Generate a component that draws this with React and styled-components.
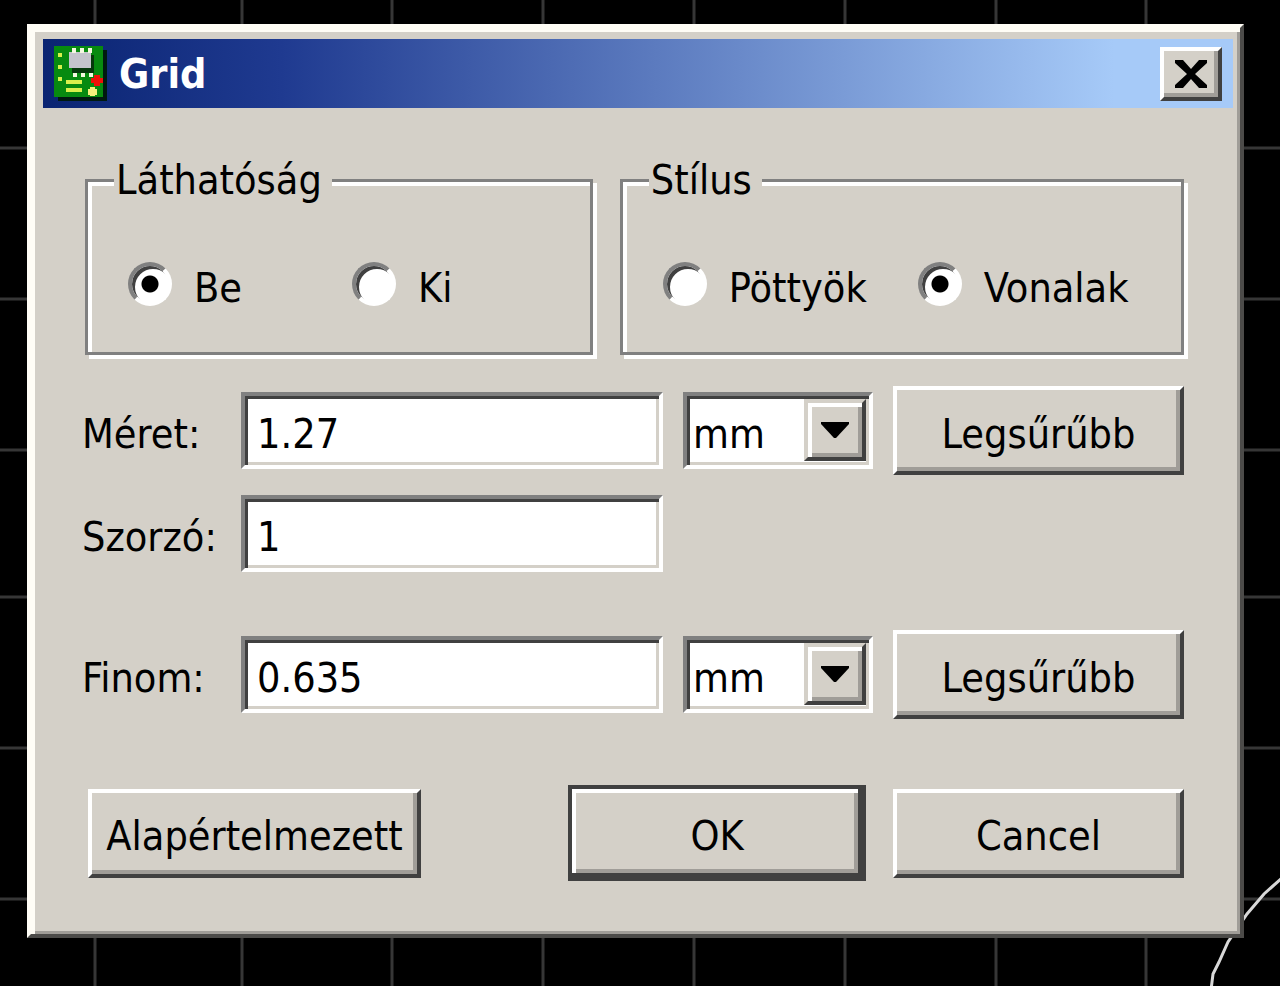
import React, { useState } from "react";
import styled, { createGlobalStyle } from "styled-components";

const GlobalStyle = createGlobalStyle`
  * {
    box-sizing: border-box;
  }
  body {
    margin: 0;
    background-color: #000000;
    overflow: hidden;
  }
  body, input, select, button {
    font-family: "DejaVu Sans Condensed", "DejaVu Sans", sans-serif;
    font-size: 41px;
    line-height: 48px;
    color: #000000;
  }
`;
const Desktop = styled.div`
  min-height: 100vh;
  padding: 24px 36px 48px 27px;
`;
const Board = styled.svg`
  position: absolute;
  top: 0;
  left: 0;
  z-index: -1;
`;
const Dialog = styled.form`
  border: 4px solid;
  border-color: #fffdf6 #4c4b49 #4c4b49 #fffdf6;
  background-color: #d4d0c8;
  box-shadow: inset 4px 4px 0 #fffdf6, inset -3px -3px 0 #a09d98;
`;
const TitleBar = styled.header`
  display: flex;
  align-items: center;
  gap: 12px;
  height: 69px;
  margin: 11px 7px 0 12px;
  padding: 0 11px;
  background: linear-gradient(to right, #0a2472, #1f3a90 20%, #a6caf8 90%);
`;
const Title = styled.h1`
  flex: 1;
  margin: 0;
  font-size: 41px;
  font-weight: bold;
  color: #ffffff;
`;
const CloseButton = styled.button`
  display: flex;
  align-items: center;
  justify-content: center;
  width: 62px;
  height: 54px;
  padding: 0;
  background-color: #d4d0c8;
  border: 4px solid;
  border-color: #ffffff #404040 #404040 #ffffff;
  box-shadow: inset -4px -4px 0 #a09d98;
`;
const Body = styled.div`
  padding: 48px 56px 53px 54px;
`;
const Groups = styled.div`
  display: grid;
  grid-template-columns: 9fr 10fr;
  gap: 27px;
  margin-bottom: 31px;
`;
const Group = styled.fieldset`
  min-width: 0;
  margin: 0;
  padding: 60px 0 40px 40px;
  border: 3px solid #808080;
  box-shadow: inset 4px 4px 0 #ffffff, 4px 4px 0 #ffffff;
`;
const Legend = styled.legend`
  margin-left: -14px;
  padding: 0 10px 0 2px;
  background-color: #d4d0c8;
`;
const Options = styled.div`
  display: grid;
  grid-template-columns: ${(props) => props.$first}px 1fr;
`;
const Option = styled.label`
  display: flex;
  align-items: center;
  gap: 22px;
  height: 48px;
  white-space: nowrap;
`;
const Radio = styled.input`
  appearance: none;
  flex: none;
  width: 44px;
  height: 44px;
  margin: 0 0 8px;
  border: 4px solid;
  border-color: #808080 #ffffff #ffffff #808080;
  border-radius: 50%;
  background-color: #ffffff;
  box-shadow: inset 3px 3px 0 #404040;

  &:checked {
    background-image: radial-gradient(circle, #000000 8px, transparent 9px);
  }
`;
const Row = styled.div`
  display: grid;
  grid-template-columns: 136px 1fr 190px 291px;
  column-gap: 20px;
  align-items: center;
  margin-bottom: ${(props) => props.$space}px;
`;
const Name = styled.label`
  margin-left: -3px;
  padding-top: 6px;
`;
const Field = styled.input`
  width: 100%;
  height: 77px;
  padding: 6px 12px 0;
  border: 4px solid;
  border-color: #808080 #ffffff #ffffff #808080;
  border-radius: 0;
  outline: none;
  background-color: #ffffff;
  box-shadow: inset 3px 3px 0 #404040, inset -3px -3px 0 #d4d0c8;
`;
const Combo = styled.div`
  display: grid;
  align-items: center;
  justify-items: end;
`;
const Select = styled.select`
  grid-area: 1 / 1;
  appearance: none;
  width: 100%;
  height: 77px;
  padding: 6px 0 0 6px;
  border: 4px solid;
  border-color: #808080 #ffffff #ffffff #808080;
  border-radius: 0;
  outline: none;
  background-color: #ffffff;
  box-shadow: inset 3px 3px 0 #404040, inset -3px -3px 0 #d4d0c8;
`;
const Arrow = styled.span`
  grid-area: 1 / 1;
  display: flex;
  align-items: center;
  justify-content: center;
  width: 62px;
  height: 62px;
  margin: 0 7px 1px 0;
  border: 4px solid;
  border-color: #d4d0c8 #404040 #404040 #d4d0c8;
  background-color: #d4d0c8;
  box-shadow: inset 4px 4px 0 #ffffff, inset -4px -4px 0 #a09d98;
  pointer-events: none;
`;
const Button = styled.button`
  width: ${(props) => props.$width || 291}px;
  height: 89px;
  padding: 6px 0 0;
  border: 4px solid;
  border-color: #ffffff #404040 #404040 #ffffff;
  border-radius: 0;
  background-color: #d4d0c8;
  box-shadow: inset -4px -4px 0 #a09d98;
  white-space: nowrap;
`;
// the button that Enter triggers has one more dark frame
const DefaultButton = styled(Button)`
  height: 96px;
  border-color: #404040;
  box-shadow: inset -4px -4px 0 #404040, inset 4px 4px 0 #ffffff,
    inset -8px -8px 0 #a09d98;
`;
const Footer = styled.footer`
  display: flex;
  align-items: center;
  gap: 27px;
  padding-left: 3px;
`;
const Spacer = styled.div`
  flex: 1;
`;

const columns = [95, 242, 392, 543, 694, 845, 996, 1146];
const rows = [148, 299, 450, 597, 748, 899];

const BoardView = () => (
  <Board width="100%" height="100%" aria-hidden="true">
    <g stroke="#363636" strokeWidth="3">
      {columns.map((x) => (
        <line key={x} x1={x} x2={x} y1="0" y2="100%" />
      ))}
      {rows.map((y) => (
        <line key={y} x1="0" x2="100%" y1={y} y2={y} />
      ))}
    </g>
    <path
      d="M1283 877 L1264 894 L1247 914 L1228 942 L1219 962 L1213 974 L1211 990"
      fill="none"
      stroke="#d8d8d8"
      strokeWidth="3"
    />
  </Board>
);

const BoardIcon = () => (
  <svg width="53" height="55" viewBox="0 0 53 55" aria-hidden="true">
    <path d="M4 4h49v51H4z" fill="#001a10" />
    <path d="M0 0h49v51H0z" fill="#078a10" />
    <path d="M18 9h22v18H18z" fill="#06380c" />
    <path d="M15 6h22v16H15z" fill="#c4c4cc" />
    <path
      d="M18 2h4v5h-4zM26 2h4v5h-4zM34 2h4v5h-4zM19 27h4v4h-4zM27 27h4v4h-4zM35 27h4v4h-4z"
      fill="#f4f8e0"
    />
    <path
      d="M4 7h4v4H4zM4 19h4v4H4zM4 31h4v4H4zM12 34h16v4H12zM12 42h16v4H12z"
      fill="#d8f04c"
    />
    <path d="M40 29h6v3h3v5h-3v3h-6v-3h-3v-5h3z" fill="#f01008" />
    <path d="M36 41h5v2h2v6h-2v1h-5v-1h-2v-6h2z" fill="#f4f07c" />
  </svg>
);

const UnitSelect = ({ label }) => (
  <Combo>
    <Select aria-label={label} defaultValue="mm">
      <option value="mm">mm</option>
    </Select>
    <Arrow>
      <svg width="28" height="16" viewBox="0 0 28 16" aria-hidden="true">
        <path d="M0 0h28v2L15 16h-2L0 2z" />
      </svg>
    </Arrow>
  </Combo>
);

const RadioGroup = ({ name, title, options, initial, first }) => {
  const [value, setValue] = useState(initial);
  return (
    <Group>
      <Legend>{title}</Legend>
      <Options $first={first}>
        {options.map((option) => (
          <Option key={option}>
            <Radio
              type="radio"
              name={name}
              checked={value === option}
              onChange={() => setValue(option)}
            />
            {option}
          </Option>
        ))}
      </Options>
    </Group>
  );
};

const App = () => (
  <Desktop>
    <GlobalStyle />
    <BoardView />
    <Dialog onSubmit={(e) => e.preventDefault()}>
      <TitleBar>
        <BoardIcon />
        <Title>Grid</Title>
        <CloseButton type="button" aria-label="Close">
          <svg width="32" height="28" viewBox="0 0 32 28" aria-hidden="true">
            <path
              d="M0 0h8l8 9 8-9h8v3L20 14l12 11v3h-8l-8-9-8 9H0v-3l12-11L0 3z"
              fill="#000000"
            />
          </svg>
        </CloseButton>
      </TitleBar>
      <Body>
        <Groups>
          <RadioGroup
            name="visibility"
            title="Láthatóság"
            options={["Be", "Ki"]}
            initial="Be"
            first={224}
          />
          <RadioGroup
            name="style"
            title="Stílus"
            options={["Pöttyök", "Vonalak"]}
            initial="Vonalak"
            first={255}
          />
        </Groups>
        <Row $space={20}>
          <Name htmlFor="size">Méret:</Name>
          <Field id="size" type="text" defaultValue="1.27" />
          <UnitSelect label="Méret" />
          <Button type="button">Legsűrűbb</Button>
        </Row>
        <Row $space={58}>
          <Name htmlFor="multiple">Szorzó:</Name>
          <Field id="multiple" type="text" defaultValue="1" />
        </Row>
        <Row $space={66}>
          <Name htmlFor="alt">Finom:</Name>
          <Field id="alt" type="text" defaultValue="0.635" />
          <UnitSelect label="Finom" />
          <Button type="button">Legsűrűbb</Button>
        </Row>
        <Footer>
          <Button type="button" $width={333}>
            Alapértelmezett
          </Button>
          <Spacer />
          <DefaultButton type="submit" $width={298}>
            OK
          </DefaultButton>
          <Button type="button">Cancel</Button>
        </Footer>
      </Body>
    </Dialog>
  </Desktop>
);

export default App;
